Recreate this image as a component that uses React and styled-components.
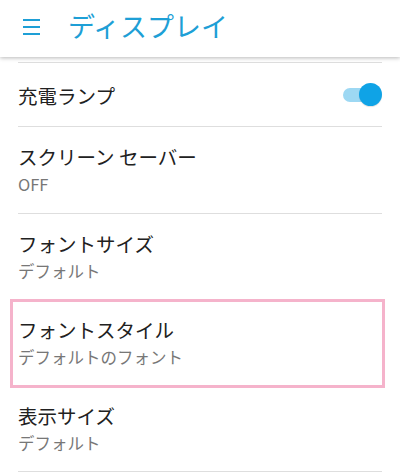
import React from "react"
import styled, { createGlobalStyle } from "styled-components"

const GlobalStyle = createGlobalStyle`
  body {
    margin: 0;
    background: #ffffff;
    font-family: "Noto Sans CJK JP", "Noto Sans", sans-serif;
  }
`

const items = [
  { title: "充電ランプ", toggle: true },
  { title: "スクリーン セーバー", subtitle: "OFF" },
  { title: "フォントサイズ", subtitle: "デフォルト" },
  { title: "フォントスタイル", subtitle: "デフォルトのフォント", highlight: true },
  { title: "表示サイズ", subtitle: "デフォルト" },
]

export default function App() {
  return (
    <Screen>
      <GlobalStyle />
      <Header>
        <MenuIcon viewBox="0 0 17 16">
          <rect x="0" y="0" width="17" height="2" />
          <rect x="0" y="7" width="17" height="2" />
          <rect x="0" y="14" width="17" height="2" />
        </MenuIcon>
        <Title>ディスプレイ</Title>
      </Header>
      <List>
        {items.map((item) => (
          <Row key={item.title} $tall={!!item.subtitle} $highlight={item.highlight}>
            <TextWrapper>
              <Label>{item.title}</Label>
              {item.subtitle && <Sub>{item.subtitle}</Sub>}
            </TextWrapper>
            {item.toggle && (
              <Switch>
                <Track />
                <Thumb />
              </Switch>
            )}
          </Row>
        ))}
      </List>
    </Screen>
  )
}

const Screen = styled.div`
  width: 400px;
  height: 473px;
  overflow: hidden;
  background: #fff;
`

const Header = styled.header`
  position: relative;
  z-index: 1;
  box-sizing: border-box;
  height: 57px;
  display: flex;
  align-items: center;
  padding: 0 0 5px 23px;
  background: #fff;
  box-shadow: 0 1px 4px rgba(0, 0, 0, 0.28);
`

const MenuIcon = styled.svg`
  width: 17px;
  height: 16px;
  fill: #1e9fd6;
  margin-top: 2px;
`

const Title = styled.h1`
  margin: 0 0 0 28px;
  font-size: 27px;
  font-weight: 400;
  line-height: 30px;
  color: #1e9fd6;
`

const List = styled.ul`
  list-style: none;
  margin: 5px 18px 0;
  padding: 0;
`

const Row = styled.li`
  position: relative;
  box-sizing: border-box;
  height: ${(p) => (p.$tall ? "86.5px" : "64px")};
  border-top: 1px solid #dedede;
  display: flex;
  align-items: center;
  justify-content: space-between;
  padding-top: 3px;

  &:last-child {
    border-bottom: 1px solid #dedede;
  }

  ${(p) =>
    p.$highlight &&
    `
    &::after {
      content: "";
      position: absolute;
      z-index: 1;
      top: -1px;
      left: -8px;
      right: -3px;
      bottom: -2px;
      border: 3px solid #f5b3cb;
      background: transparent;
      pointer-events: none;
    }
  `}
`

const TextWrapper = styled.div`
  display: flex;
  flex-direction: column;
`

const Label = styled.div`
  font-size: 19.5px;
  line-height: 26px;
  color: #212121;
`

const Sub = styled.div`
  font-size: 16.5px;
  line-height: 28px;
  color: #777777;
`

const Switch = styled.div`
  position: relative;
  width: 39px;
  height: 23px;
  display: flex;
  align-items: center;
  margin-bottom: 3px;
`

const Track = styled.div`
  width: 32px;
  height: 14px;
  border-radius: 7px;
  background: #9dd8f3;
`

const Thumb = styled.div`
  position: absolute;
  right: 0;
  top: 0;
  width: 23px;
  height: 23px;
  border-radius: 50%;
  background: #0fa3e6;
  box-shadow: 0 1px 1px rgba(0, 0, 0, 0.12);
`
